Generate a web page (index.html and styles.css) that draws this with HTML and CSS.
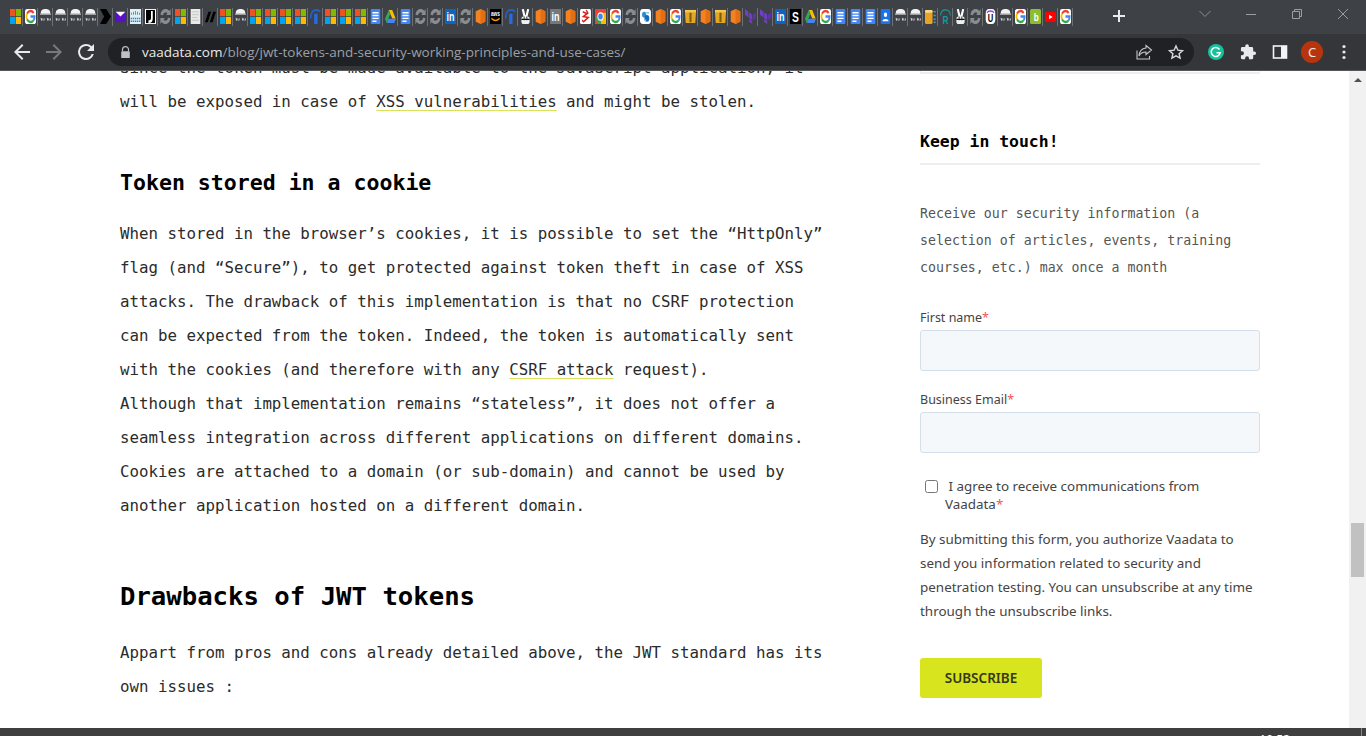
FILE: index.html
```html
<!DOCTYPE html>
<html lang="en">
<head>
<meta charset="utf-8">
<title>JWT tokens and security - Vaadata</title>
<link rel="stylesheet" href="styles.css">
</head>
<body>
<svg class="sprites" aria-hidden="true">
  <symbol id="ms" viewBox="0 0 16 16" preserveAspectRatio="none"><rect x="0" y="0" width="7.6" height="7.6" fill="#f25022"/><rect x="8.4" y="0" width="7.6" height="7.6" fill="#7fba00"/><rect x="0" y="8.4" width="7.6" height="7.6" fill="#00a4ef"/><rect x="8.4" y="8.4" width="7.6" height="7.6" fill="#ffb900"/></symbol>
  <symbol id="g" viewBox="0 0 16 16" preserveAspectRatio="none"><rect width="16" height="16" rx="3" fill="#fff"/><path d="M12.6 4.2A6 6 0 0 0 3 5" fill="none" stroke="#ea4335" stroke-width="2.6"/><path d="M3 5A6 6 0 0 0 3 11" fill="none" stroke="#fbbc05" stroke-width="2.6"/><path d="M3 11A6 6 0 0 0 12.6 12" fill="none" stroke="#34a853" stroke-width="2.6"/><path d="M12.6 12A6 6 0 0 0 14 8H8" fill="none" stroke="#4285f4" stroke-width="2.6"/></symbol>
  <symbol id="spy" viewBox="0 0 16 16" preserveAspectRatio="none"><path d="M1 5C1 1 4 0 8 0s7 1 7 5z" fill="#f2f2f2"/><rect x="0" y="5" width="16" height="1" fill="#d8d8d8"/><path d="M1 10h1v2h1v-2M5 12h1v-2M10 10h1v2h1v-2M14 12h1v-2" fill="none" stroke="#e6e6e6" stroke-width="1"/></symbol>
  <symbol id="chev" viewBox="0 0 16 16" preserveAspectRatio="none"><path d="M0 0h9l7 8-7 8H0l6-8z" fill="#000"/></symbol>
  <symbol id="mail" viewBox="0 0 16 16" preserveAspectRatio="none"><rect y="3" width="16" height="11" fill="#5a10c8"/><path d="M1 3h14L8 8z" fill="#fff"/></symbol>
  <symbol id="cisco" viewBox="0 0 16 16" preserveAspectRatio="none"><rect width="16" height="16" fill="#dfeef5"/><path d="M2 4v2M5 3v3M8 2v4M11 3v3M14 4v2" stroke="#2a86b8" stroke-width="1.2"/><path d="M1 10h14M1 13h14" stroke="#2a86b8" stroke-width="1.6" stroke-dasharray="2 1"/></symbol>
  <symbol id="j" viewBox="0 0 16 16" preserveAspectRatio="none"><rect width="16" height="16" fill="#fff"/><rect x="1.500" y="1" width="13" height="14" fill="#000"/><path d="M10 2v8c0 3-2 3.500-5 3.500" fill="none" stroke="#fff" stroke-width="2.600"/></symbol>
  <symbol id="c" viewBox="0 0 16 16" preserveAspectRatio="none"><path d="M2.500 6.500a5.700 5.700 0 0 1 10.500-2M13.500 9.500a5.700 5.700 0 0 1-10.500 2" fill="none" stroke="#8a8d90" stroke-width="3.600"/><path d="M15.500 0v6.500H9zM.500 16V9.500H7z" fill="#8a8d90"/></symbol>
  <symbol id="doc" viewBox="0 0 16 16" preserveAspectRatio="none"><rect x="1" width="14" height="16" fill="#e9e9e9"/><path d="M3 3h10M3 6h10M3 9h8M3 12h10" stroke="#bcbcbc"/></symbol>
  <symbol id="sl" viewBox="0 0 16 16" preserveAspectRatio="none"><path d="M5 3h4L4 14H0zM12 3h4l-5 11H7z" fill="#000"/></symbol>
  <symbol id="i" viewBox="0 0 16 16" preserveAspectRatio="none"><path d="M1 10C1 4 4 1 9 1c3 0 5 1 6 2" fill="none" stroke="#2460c8" stroke-width="2.200"/><rect x="6" y="5" width="5" height="11" fill="#2a6ae0"/></symbol>
  <symbol id="gdoc" viewBox="0 0 16 16" preserveAspectRatio="none"><rect x="1" width="14" height="16" rx="1" fill="#4285f4"/><path d="M3.500 4h9M3.500 7h9M3.500 10h9M3.500 13h6" stroke="#fff" stroke-width="1.500"/></symbol>
  <symbol id="drive" viewBox="0 0 16 16" preserveAspectRatio="none"><path d="M5.500 1h5l5 9h-5z" fill="#fbbc05"/><path d="M5.500 1L0 10.500l2.500 4.500 5-9.500z" fill="#34a853"/><path d="M5 10.500h11l-2.500 4.500H2.500z" fill="#4285f4"/></symbol>
  <symbol id="in" viewBox="0 0 16 16" preserveAspectRatio="none"><rect width="16" height="16" fill="#0a66c2"/><text x="8" y="13" class="sym-text" text-anchor="middle" font-size="13" fill="#fff">in</text></symbol>
  <symbol id="ing" viewBox="0 0 16 16" preserveAspectRatio="none"><rect width="16" height="16" fill="#777"/><text x="8" y="13" class="sym-text" text-anchor="middle" font-size="13" fill="#fff">in</text></symbol>
  <symbol id="hex" viewBox="0 0 16 16" preserveAspectRatio="none"><path d="M8 0l7 2.500v11L8 16l-7-2.500v-11z" fill="#f58220"/><path d="M8 0l7 2.500v11L8 16z" fill="#e36f14"/></symbol>
  <symbol id="aws" viewBox="0 0 16 16" preserveAspectRatio="none"><rect width="16" height="16" fill="#000"/><text x="8" y="8" class="sym-text" text-anchor="middle" font-size="7" fill="#fff">aws</text><path d="M2 10c4 3 8 3 12 0" fill="none" stroke="#f90" stroke-width="1.500"/></symbol>
  <symbol id="peace" viewBox="0 0 16 16" preserveAspectRatio="none"><path d="M4 0l3 9M12 0L9 9" stroke="#fff" stroke-width="3"/><rect x="2" y="8" width="12" height="8" rx="3" fill="#efefef"/><path d="M2 11h12M6 8v4M10 8v4" stroke="#111" stroke-width="1.200"/></symbol>
  <symbol id="red" viewBox="0 0 16 16" preserveAspectRatio="none"><rect width="16" height="16" rx="2" fill="#fff"/><path d="M4 3l6 2-5 3 7 1-6 4M9 1l3 4M3 12l3 2" fill="none" stroke="#d6201c" stroke-width="1.800"/></symbol>
  <symbol id="chrome" viewBox="0 0 16 16" preserveAspectRatio="none"><rect width="16" height="16" fill="#ea4335"/><path d="M0 8l4 8h12V8z" fill="#34a853"/><path d="M8 4h8v12H9z" fill="#fbbc05"/><circle cx="8" cy="8" r="4.500" fill="#fff"/><circle cx="8" cy="8" r="3.300" fill="#4285f4"/></symbol>
  <symbol id="blob" viewBox="0 0 16 16" preserveAspectRatio="none"><rect width="16" height="16" rx="4" fill="#fff"/><circle cx="6" cy="6" r="3" fill="#2b8fd8"/><circle cx="10" cy="10" r="3.500" fill="#1669b8"/><path d="M6 12h3M9 4h4" stroke="#7bc6ee" stroke-width="1.500"/></symbol>
  <symbol id="gold" viewBox="0 0 16 16" preserveAspectRatio="none"><path d="M0 3h16l-1 12H1z" fill="#e3a726"/><rect y="1" width="16" height="2.500" fill="#f4c84e"/><rect x="6.500" y="4" width="3" height="10" fill="#7c5a0f"/></symbol>
  <symbol id="tf" viewBox="0 0 16 16" preserveAspectRatio="none"><path d="M0 0l5 3v6L0 6zM6 3.500l4.500 2.600V12L6 9.500zM6 10.500l4.500 2.600V16L6 13.500z" fill="#7040c4"/><path d="M11.500 6l4.500-2.500v6L11.500 12z" fill="#5f32ab"/></symbol>
  <symbol id="s" viewBox="0 0 16 16" preserveAspectRatio="none"><rect width="16" height="16" fill="#000"/><text x="8" y="14" class="sym-text" text-anchor="middle" font-size="15" fill="#fff">S</text></symbol>
  <symbol id="contact" viewBox="0 0 16 16" preserveAspectRatio="none"><rect x="1" width="14" height="16" rx="1" fill="#1a73e8"/><circle cx="8" cy="6" r="2.400" fill="#fff"/><path d="M3.500 13c0-3 9-3 9 0z" fill="#fff"/></symbol>
  <symbol id="db" viewBox="0 0 16 16" preserveAspectRatio="none"><rect y="1" width="11" height="15" rx="2" fill="#e9a324"/><rect y="1" width="11" height="3" rx="1.500" fill="#f6d98c"/><path d="M12.500 3h3M12.500 7h3M12.500 11h3M12.500 14h3" stroke="#4a9bd4" stroke-width="1.600"/></symbol>
  <symbol id="r" viewBox="0 0 16 16" preserveAspectRatio="none"><path d="M1 7C1 2 4 1 8 1s7 1 7 6" fill="none" stroke="#1a9aa0" stroke-width="1.300"/><text x="8" y="15.500" class="sym-text" text-anchor="middle" font-size="12" fill="#1a9aa0">R</text></symbol>
  <symbol id="u" viewBox="0 0 16 16" preserveAspectRatio="none"><rect x="1" width="14" height="16" rx="5" fill="#fff"/><path d="M3 4c2-2.500 8-2.500 10 0" fill="none" stroke="#9b30e8" stroke-width="1.500"/><text x="8" y="14" class="sym-text" text-anchor="middle" font-size="11" fill="#000">U</text></symbol>
  <symbol id="b" viewBox="0 0 16 16" preserveAspectRatio="none"><rect width="16" height="16" rx="2" fill="#8dbc2e"/><text x="9" y="13" class="sym-text" text-anchor="middle" font-size="12" fill="#fff">b</text></symbol>
  <symbol id="yt" viewBox="0 0 16 16" preserveAspectRatio="none"><rect y="3" width="16" height="11" fill="#f00"/><path d="M6 6l5 2.500L6 11z" fill="#fff"/></symbol>
</svg>

<header class="browser">
  <div class="tabstrip">
    <ul class="tabs">
      <li class="tab"><svg class="fav"><use href="#ms"/></svg></li>
      <li class="tab"><svg class="fav"><use href="#g"/></svg></li>
      <li class="tab"><svg class="fav"><use href="#spy"/></svg></li>
      <li class="tab"><svg class="fav"><use href="#spy"/></svg></li>
      <li class="tab"><svg class="fav"><use href="#spy"/></svg></li>
      <li class="tab"><svg class="fav"><use href="#spy"/></svg></li>
      <li class="tab"><svg class="fav"><use href="#chev"/></svg></li>
      <li class="tab"><svg class="fav"><use href="#mail"/></svg></li>
      <li class="tab"><svg class="fav"><use href="#cisco"/></svg></li>
      <li class="tab"><svg class="fav"><use href="#j"/></svg></li>
      <li class="tab"><svg class="fav"><use href="#c"/></svg></li>
      <li class="tab"><svg class="fav"><use href="#ms"/></svg></li>
      <li class="tab"><svg class="fav"><use href="#doc"/></svg></li>
      <li class="tab"><svg class="fav"><use href="#sl"/></svg></li>
      <li class="tab"><svg class="fav"><use href="#ms"/></svg></li>
      <li class="tab"><svg class="fav"><use href="#spy"/></svg></li>
      <li class="tab"><svg class="fav"><use href="#ms"/></svg></li>
      <li class="tab"><svg class="fav"><use href="#ms"/></svg></li>
      <li class="tab"><svg class="fav"><use href="#ms"/></svg></li>
      <li class="tab"><svg class="fav"><use href="#ms"/></svg></li>
      <li class="tab"><svg class="fav"><use href="#i"/></svg></li>
      <li class="tab"><svg class="fav"><use href="#ms"/></svg></li>
      <li class="tab"><svg class="fav"><use href="#ms"/></svg></li>
      <li class="tab"><svg class="fav"><use href="#ms"/></svg></li>
      <li class="tab"><svg class="fav"><use href="#gdoc"/></svg></li>
      <li class="tab"><svg class="fav"><use href="#drive"/></svg></li>
      <li class="tab"><svg class="fav"><use href="#gdoc"/></svg></li>
      <li class="tab"><svg class="fav"><use href="#c"/></svg></li>
      <li class="tab"><svg class="fav"><use href="#c"/></svg></li>
      <li class="tab"><svg class="fav"><use href="#in"/></svg></li>
      <li class="tab"><svg class="fav"><use href="#c"/></svg></li>
      <li class="tab"><svg class="fav"><use href="#hex"/></svg></li>
      <li class="tab"><svg class="fav"><use href="#aws"/></svg></li>
      <li class="tab"><svg class="fav"><use href="#i"/></svg></li>
      <li class="tab"><svg class="fav"><use href="#peace"/></svg></li>
      <li class="tab"><svg class="fav"><use href="#hex"/></svg></li>
      <li class="tab"><svg class="fav"><use href="#ing"/></svg></li>
      <li class="tab"><svg class="fav"><use href="#hex"/></svg></li>
      <li class="tab"><svg class="fav"><use href="#red"/></svg></li>
      <li class="tab"><svg class="fav"><use href="#chrome"/></svg></li>
      <li class="tab"><svg class="fav"><use href="#g"/></svg></li>
      <li class="tab"><svg class="fav"><use href="#c"/></svg></li>
      <li class="tab"><svg class="fav"><use href="#blob"/></svg></li>
      <li class="tab"><svg class="fav"><use href="#hex"/></svg></li>
      <li class="tab"><svg class="fav"><use href="#g"/></svg></li>
      <li class="tab"><svg class="fav"><use href="#gold"/></svg></li>
      <li class="tab"><svg class="fav"><use href="#hex"/></svg></li>
      <li class="tab"><svg class="fav"><use href="#gold"/></svg></li>
      <li class="tab"><svg class="fav"><use href="#hex"/></svg></li>
      <li class="tab"><svg class="fav"><use href="#tf"/></svg></li>
      <li class="tab"><svg class="fav"><use href="#tf"/></svg></li>
      <li class="tab"><svg class="fav"><use href="#in"/></svg></li>
      <li class="tab"><svg class="fav"><use href="#s"/></svg></li>
      <li class="tab"><svg class="fav"><use href="#drive"/></svg></li>
      <li class="tab"><svg class="fav"><use href="#g"/></svg></li>
      <li class="tab"><svg class="fav"><use href="#gdoc"/></svg></li>
      <li class="tab"><svg class="fav"><use href="#gdoc"/></svg></li>
      <li class="tab"><svg class="fav"><use href="#gdoc"/></svg></li>
      <li class="tab"><svg class="fav"><use href="#contact"/></svg></li>
      <li class="tab"><svg class="fav"><use href="#spy"/></svg></li>
      <li class="tab"><svg class="fav"><use href="#spy"/></svg></li>
      <li class="tab"><svg class="fav"><use href="#db"/></svg></li>
      <li class="tab"><svg class="fav"><use href="#r"/></svg></li>
      <li class="tab"><svg class="fav"><use href="#peace"/></svg></li>
      <li class="tab"><svg class="fav"><use href="#c"/></svg></li>
      <li class="tab"><svg class="fav"><use href="#u"/></svg></li>
      <li class="tab"><svg class="fav"><use href="#spy"/></svg></li>
      <li class="tab"><svg class="fav"><use href="#g"/></svg></li>
      <li class="tab"><svg class="fav"><use href="#b"/></svg></li>
      <li class="tab"><svg class="fav"><use href="#yt"/></svg></li>
      <li class="tab"><svg class="fav"><use href="#g"/></svg></li>
    </ul>
    <button class="new-tab" aria-label="New tab"><svg class="ico-16" viewBox="0 0 16 16"><path d="M7 2h2v5h5v2H9v5H7V9H2V7h5z" fill="#e8eaed"/></svg></button>
    <div class="strip-fill"></div>
    <button class="win-btn tab-search" aria-label="Search tabs"><svg class="ico-16" viewBox="0 0 16 16"><path d="M2.500 5L8 10.500 13.500 5" fill="none" stroke="#8a8d91"/></svg></button>
    <button class="win-btn" aria-label="Minimize"><svg class="ico-16" viewBox="0 0 16 16"><path d="M3 8.500h10" stroke="#9a9da1"/></svg></button>
    <button class="win-btn" aria-label="Restore"><svg class="ico-16" viewBox="0 0 16 16"><path d="M3.500 5.500h7v7h-7zM5.500 5.500v-2h7v7h-2" fill="none" stroke="#9a9da1"/></svg></button>
    <button class="win-btn" aria-label="Close"><svg class="ico-16" viewBox="0 0 16 16"><path d="M3 3l10 10M13 3L3 13" stroke="#9a9da1"/></svg></button>
  </div>
  <div class="toolbar">
    <button class="tool" aria-label="Back"><svg class="ico-24" viewBox="0 0 24 24"><path d="M20 11H7.830l5.590-5.590L12 4l-8 8 8 8 1.410-1.410L7.830 13H20z" fill="#e8eaed"/></svg></button>
    <button class="tool" aria-label="Forward"><svg class="ico-24" viewBox="0 0 24 24"><path d="M12 4l-1.410 1.410L16.170 11H4v2h12.170l-5.580 5.590L12 20l8-8z" fill="#77797c"/></svg></button>
    <button class="tool" aria-label="Reload"><svg class="ico-24" viewBox="0 0 24 24"><path d="M17.650 6.350A7.960 7.960 0 0 0 12 4a8 8 0 1 0 7.730 10h-2.080A6 6 0 1 1 12 6c1.660 0 3.140.690 4.220 1.780L13 11h7V4z" fill="#e8eaed"/></svg></button>
    <div class="omnibox">
      <svg class="lock" viewBox="0 0 12 14"><path d="M2.500 6V4.200a3.500 3.500 0 0 1 7 0V6" fill="none" stroke="#bdc1c6" stroke-width="1.400"/><rect x="1" y="6" width="10" height="8" rx="1" fill="#bdc1c6"/></svg>
      <span class="url"><span class="host">vaadata.com</span>/blog/jwt-tokens-and-security-working-principles-and-use-cases/</span>
      <svg class="omni-ico" viewBox="0 0 18 18"><path d="M2 7.500V16h12.500v-3M11 2.500L16.500 7 11 11.500V9c-3.500 0-5.500 1-7 4 .3-4 2.500-7.500 7-8z" fill="none" stroke="#c4c7ca" stroke-width="1.100"/></svg>
      <svg class="omni-ico" viewBox="0 0 18 18"><path d="M9 3l1.900 4.200 4.600.5-3.400 3 1 4.500L9 12.900l-4.100 2.300 1-4.500-3.400-3 4.600-.5z" fill="none" stroke="#d8dadc" stroke-width="1.400"/></svg>
    </div>
    <button class="tool tool-end" aria-label="Grammarly"><svg class="ico-24" viewBox="0 0 24 24"><circle cx="12" cy="12" r="8" fill="#15c39a"/><path d="M15.500 9.500a4.500 4.500 0 1 0 .7 3.200H12.500" fill="none" stroke="#fff" stroke-width="1.500"/></svg></button>
    <button class="tool" aria-label="Extensions"><svg class="ico-24" viewBox="0 0 24 24"><path d="M20.500 11H19V7a2 2 0 0 0-2-2h-4V3.500a2.500 2.500 0 0 0-5 0V5H4a2 2 0 0 0-2 2v3.800h1.500a2.700 2.700 0 0 1 0 5.400H2V20a2 2 0 0 0 2 2h3.800v-1.500a2.700 2.700 0 0 1 5.400 0V22H17a2 2 0 0 0 2-2v-4h1.500a2.500 2.500 0 0 0 0-5z" fill="#e8eaed" transform="translate(3.500 3.500) scale(.72)"/></svg></button>
    <button class="tool" aria-label="Side panel"><svg class="ico-24" viewBox="0 0 24 24"><rect x="5.500" y="6" width="13" height="12" fill="none" stroke="#f1f3f4" stroke-width="1.600"/><rect x="13" y="6" width="6" height="12" fill="#f1f3f4"/></svg></button>
    <button class="tool" aria-label="Profile"><span class="avatar">C</span></button>
    <button class="tool" aria-label="Menu"><svg class="ico-24" viewBox="0 0 24 24"><circle cx="12" cy="6.500" r="1.600" fill="#e8eaed"/><circle cx="12" cy="12" r="1.600" fill="#e8eaed"/><circle cx="12" cy="17.500" r="1.600" fill="#e8eaed"/></svg></button>
  </div>
</header>

<div class="viewport">
  <main class="page">
    <article class="article">
      <p class="body-text">Since the token must be made available to the JavaScript application, it will be exposed in case of <a class="inline-link" href="#">XSS vulnerabilities</a> and might be stolen.</p>
      <h3 class="h-sub">Token stored in a cookie</h3>
      <p class="body-text">When stored in the browser’s cookies, it is possible to set the “HttpOnly” flag (and “Secure”), to get protected against token theft in case of XSS attacks. The drawback of this implementation is that no CSRF protection can be expected from the token. Indeed, the token is automatically sent with the cookies (and therefore with any <a class="inline-link" href="#">CSRF attack</a> request).<br>Although that implementation remains “stateless”, it does not offer a seamless integration across different applications on different domains. Cookies are attached to a domain (or sub-domain) and cannot be used by another application hosted on a different domain.</p>
      <h2 class="h-main">Drawbacks of JWT tokens</h2>
      <p class="body-text">Appart from pros and cons already detailed above, the JWT standard has its own issues :</p>
    </article>
    <aside class="sidebar">
      <div class="prev-box"></div>
      <h4 class="side-title">Keep in touch!</h4>
      <p class="side-intro">Receive our security information (a selection of articles, events, training courses, etc.) max once a month</p>
      <form class="form">
        <label class="field-label" for="fname">First name<span class="req">*</span></label>
        <input class="field" id="fname" type="text">
        <label class="field-label field-gap" for="email">Business Email<span class="req">*</span></label>
        <input class="field" id="email" type="email">
        <label class="consent"><input class="check" type="checkbox"> I agree to receive communications from Vaadata<span class="req">*</span></label>
        <p class="legal">By submitting this form, you authorize Vaadata to send you information related to security and penetration testing. You can unsubscribe at any time through the unsubscribe links.</p>
        <button class="submit" type="button">SUBSCRIBE</button>
      </form>
    </aside>
  </main>
  <div class="scrollbar">
    <span class="scroll-up"></span>
    <span class="scroll-thumb"></span>
  </div>
</div>
<footer class="taskbar"><span class="clock">10:52</span><span class="show-desktop"></span></footer>
</body>
</html>
```

FILE: styles.css
```css
* { box-sizing: border-box; }
html, body { margin: 0; height: 736px; overflow: hidden; }
body { display: flex; flex-direction: column; background: #fff; font-family: "Noto Sans", sans-serif; }
button { border: 0; padding: 0; background: none; font: inherit; }
.sprites { position: absolute; width: 0; height: 0; }
.sym-text { font-family: "Liberation Sans", sans-serif; font-weight: 700; }

.browser { flex: none; height: 71px; display: flex; flex-direction: column; }
.tabstrip { height: 34px; background: #3e4145; display: flex; align-items: flex-start; }
.tabs { list-style: none; margin: 8px 0 0 8px; padding: 0; display: flex; }
.tab { width: 15px; height: 18px; padding: 1px 0 0 2px; border-right: 1px solid #6d7074; }
.fav { display: block; width: 11px; height: 15px; }
.new-tab { width: 32px; height: 32px; margin-left: 30px; display: flex; align-items: center; justify-content: center; }
.strip-fill { flex: 1; }
.win-btn { width: 46px; height: 28px; display: flex; align-items: center; justify-content: center; }
.tab-search { width: 30px; margin-right: 8px; }
.ico-16 { display: block; width: 16px; height: 16px; }
.ico-24 { display: block; width: 24px; height: 24px; }

.toolbar { height: 37px; background: #35363a; border-bottom: 1px solid #55575a; display: flex; align-items: flex-start; padding: 4px 6px 0; }
.tool { width: 32px; height: 28px; display: flex; align-items: center; justify-content: center; flex: none; }
.tool-end { margin-left: 6px; }
.avatar { width: 22px; height: 22px; border-radius: 50%; background: #b7350d; color: #f3e4de; font-size: 13px; line-height: 22px; text-align: center; }
.omnibox { flex: 1; height: 28px; background: #202124; border-radius: 14px; margin-left: 6px; display: flex; align-items: center; padding: 0 9px 0 12px; }
.lock { width: 11px; height: 12px; flex: none; margin-right: 11px; }
.url { flex: 1; font-family: "Open Sans", sans-serif; font-size: 13.5px; color: #9aa0a6; white-space: nowrap; }
.host { color: #e8eaed; }
.omni-ico { width: 18px; height: 18px; margin-left: 14px; flex: none; }

.viewport { flex: 1; min-height: 0; display: flex; overflow: hidden; }
.page { flex: 1; min-width: 0; display: flex; padding-left: 120px; background: #fff; }
.article { width: 705px; flex: none; margin-top: -20px; }
.body-text { margin: 0; font: 15.78px/34px "DejaVu Sans Mono", monospace; color: #2b2b2b; }
.inline-link { color: inherit; text-decoration: underline 1px #d9e25a; text-underline-offset: 3px; }
.h-sub { margin: 47px 0 17px; font: 700 21.55px/34px "DejaVu Sans Mono", monospace; color: #000; }
.h-main { margin: 53px 0 20px; font: 700 25.65px/40px "DejaVu Sans Mono", monospace; color: #000; }

.sidebar { width: 340px; margin-left: 95px; flex: none; }
.prev-box { height: 3px; border: 1px solid #eee; border-top: 0; border-bottom-width: 2px; }
.side-title { margin: 56px 0 0; padding-bottom: 9px; border-bottom: 2px solid #eee; font: 700 16.45px/24px "DejaVu Sans Mono", monospace; color: #000; }
.side-intro { margin: 35px 0 0; font: 13.25px/27px "DejaVu Sans Mono", monospace; color: #555; }
.form { display: flex; flex-direction: column; align-items: flex-start; margin-top: 29px; }
.field-label { font-size: 12.5px; line-height: 16px; color: #444; }
.field-gap { margin-top: 21px; }
.req { color: #f2545b; }
.field { width: 100%; height: 41px; margin: 4px 0 0; background: #f5f8fa; border: 1px solid #d5dfe9; border-radius: 3px; }
.consent { margin-top: 24px; padding-left: 25px; padding-right: 40px; font-size: 13.4px; line-height: 18px; color: #444; }
.check { width: 13px; height: 13px; margin: 0 7px 0 -20px; vertical-align: -2px; }
.legal { margin: 14px 0 0; font-size: 13.45px; line-height: 24px; color: #444; }
.submit { margin-top: 35px; width: 122px; height: 40px; background: #d7e41e; border-radius: 3px; color: #33381a; font-size: 13.5px; font-weight: 600; }

.scrollbar { width: 17px; flex: none; background: #f1f1f1; display: flex; flex-direction: column; align-items: center; padding-top: 7px; }
.scroll-up { width: 0; height: 0; border: 4px solid transparent; border-top: 0; border-bottom: 4px solid #505050; }
.scroll-thumb { width: 13px; height: 54px; margin-top: 441px; background: #c1c1c1; }

.taskbar { flex: none; height: 8px; background: #3f3f3f; overflow: hidden; display: flex; justify-content: flex-end; }
.clock { margin-right: 71px; padding-top: 5px; font: 12px/14px "Noto Sans", sans-serif; color: #fff; }
.show-desktop { width: 1px; margin-right: 4px; background: #888; }
```
